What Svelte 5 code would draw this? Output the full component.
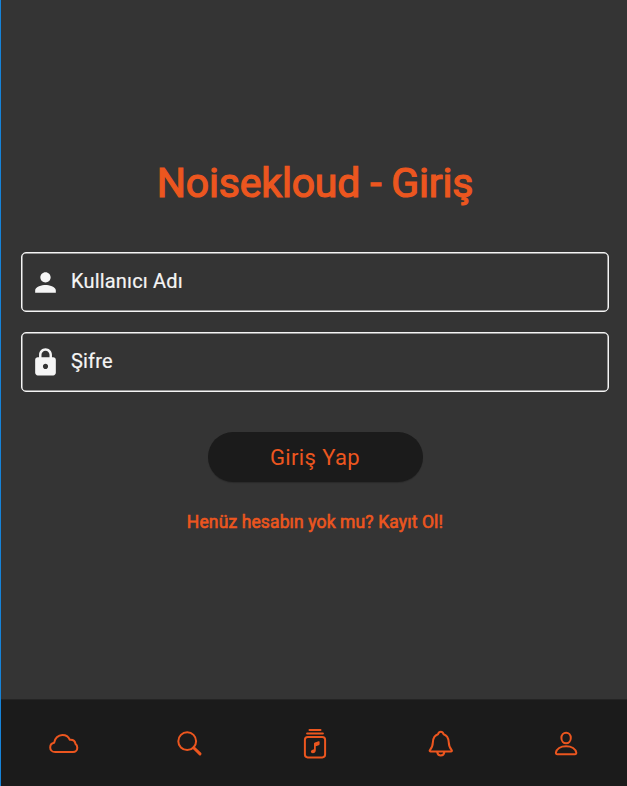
<script>
  const fields = [
    { label: 'Kullanıcı Adı', type: 'text', icon: 'M12 12c2.21 0 4-1.79 4-4s-1.79-4-4-4-4 1.79-4 4 1.79 4 4 4zm0 2c-2.67 0-8 1.34-8 4v2h16v-2c0-2.66-5.33-4-8-4z' },
    { label: 'Şifre', type: 'password', icon: 'M18 8h-1V6c0-2.76-2.24-5-5-5S7 3.24 7 6v2H6c-1.1 0-2 .9-2 2v10c0 1.1.9 2 2 2h12c1.1 0 2-.9 2-2V10c0-1.1-.9-2-2-2zm-6 9c-1.1 0-2-.9-2-2s.9-2 2-2 2 .9 2 2-.9 2-2 2zm3.1-9H8.9V6c0-1.71 1.39-3.1 3.1-3.1 1.71 0 3.1 1.39 3.1 3.1v2z' }
  ];
</script>

<div class="app">
  <main>
    <h1>Noisekloud - Giriş</h1>
    {#each fields as field}
      <label class="field">
        <svg viewBox="0 0 24 24" width="31" height="31"><path d={field.icon} /></svg>
        <input type={field.type} placeholder={field.label} />
      </label>
    {/each}
    <button class="login">Giriş Yap</button>
    <button class="register">Henüz hesabın yok mu? Kayıt Ol!</button>
  </main>
  <nav>
    <button aria-label="Cloud">
      <svg viewBox="0 0 40 40"><path d="M11.2 28C8 28 6.2 25.900 6.2 23.400C6.2 21 7.8 19.200 10.100 18.800C10.700 14.400 14.100 11 18.400 11C21.900 11 24.500 12.800 25.700 15.700C28.900 15.400 31.100 17.200 31.500 19.900C32.700 20.700 33.300 22.100 33.300 23.700C33.300 26.200 31.500 28 29 28Z" /></svg>
    </button>
    <button aria-label="Ara">
      <svg viewBox="0 0 40 40"><circle cx="18.2" cy="17.2" r="8.9" /><path class="handle" d="M24.700 23.700L31 29.900" /></svg>
    </button>
    <button aria-label="Albümler">
      <svg viewBox="0 0 40 40"><path d="M15.5 6H26.5M13.1 9.500H28.900" /><rect x="10.9" y="13" width="20.2" height="20.4" rx="2.8" /><path class="note" d="M20 19.600Q20 18.700 20.900 18.400L24.600 17.300Q25.600 17 25.600 18V19.900Q25.600 20.900 24.700 21.200L21.800 22.200V26.300C21.800 28.400 20.400 29.300 18.900 29.300C17.600 29.300 16.900 28.600 16.900 27.600C16.900 26.500 17.700 26 18.700 25.700L20 25.300Z" /></svg>
    </button>
    <button aria-label="Bildirimler">
      <svg viewBox="0 0 40 40"><path transform="translate(1.5 0)" d="M9.8 27.4C9.1 27.4 9 26.7 9.4 26.2C11.4 24 12.2 22.7 12.4 18C12.7 13.5 14.3 11.2 17.5 10.2C18 8.7 18.9 7.8 20.3 7.8C21.7 7.8 22.6 8.7 23.1 10.2C26.3 11.2 27.9 13.5 28.2 18C28.4 22.7 29.2 24 31.2 26.2C31.6 26.7 31.5 27.4 30.8 27.4ZM16.7 28C17 30.2 18.3 31.4 20.3 31.4C22.3 31.4 23.6 30.2 23.9 28" /></svg>
    </button>
    <button aria-label="Profil">
      <svg viewBox="0 0 40 40"><g transform="translate(1.8 0)"><ellipse cx="20.3" cy="14" rx="4.7" ry="5.3" /><path d="M11.5 30.2C10.5 30.2 10 29.7 10.1 28.7C10.7 24.9 14.7 22.2 20.3 22.2C25.9 22.2 29.9 24.9 30.5 28.7C30.6 29.7 30.1 30.2 29.1 30.2Z" /></g></svg>
    </button>
  </nav>
</div>

<style>
  .app {
    box-sizing: border-box;
    width: 100%;
    height: 786px;
    display: flex;
    flex-direction: column;
    background: #343434;
    border-left: 1px solid #1683d8;
    font-family: Roboto, sans-serif;
    color: #ec561f;
  }
  main {
    flex: 1;
    display: flex;
    flex-direction: column;
    align-items: center;
    padding: 158px 18px 0 20px;
  }
  h1 {
    margin: 0 0 44px;
    font-size: 41px;
    line-height: 50px;
    font-weight: 400;
    letter-spacing: -0.2px;
    white-space: nowrap;
    -webkit-text-stroke: 1.2px currentColor;
  }
  .field {
    box-sizing: border-box;
    width: 100%;
    height: 60px;
    margin-bottom: 20px;
    display: flex;
    align-items: center;
    gap: 10px;
    padding-left: 8px;
    border: 1px solid #f5f5f5;
    box-shadow: inset 0 0 0 0.5px #f5f5f5;
    border-radius: 5px;
  }
  .field svg { fill: #f5f5f5; flex: none; }
  input {
    flex: 1;
    min-width: 0;
    padding: 0 0 2px;
    border: 0;
    outline: 0;
    background: none;
    font: 400 20px Roboto, sans-serif;
    letter-spacing: 0.17px;
    color: #f5f5f5;
  }
  input::placeholder {
    color: #f5f5f5;
    opacity: 1;
    -webkit-text-stroke: 0.2px #f5f5f5;
  }
  button {
    padding: 0;
    border: 0;
    background: none;
    font-family: inherit;
    color: inherit;
  }
  .login {
    width: 215px;
    height: 50px;
    margin-top: 20px;
    border-radius: 25px;
    background: #1b1b1b;
    box-shadow: 0 1px 1px #0003;
    font-size: 22px;
    letter-spacing: 0.38px;
  }
  .register {
    margin-top: 30px;
    font-size: 17.5px;
    line-height: 21px;
    letter-spacing: 0.12px;
    white-space: nowrap;
    -webkit-text-stroke: 0.6px currentColor;
  }
  nav {
    box-sizing: border-box;
    height: 87px;
    padding-top: 2px;
    flex: none;
    display: flex;
    background: #1b1b1b;
    box-shadow: inset 0 1px #242424;
  }
  nav button {
    flex: 1;
    display: flex;
    align-items: center;
    justify-content: center;
  }
  nav svg {
    width: 40px;
    height: 40px;
    fill: none;
    stroke: currentColor;
    stroke-width: 2;
    stroke-linecap: round;
    stroke-linejoin: round;
  }
  .handle { stroke-width: 3; }
  .note { fill: currentColor; stroke: none; }
</style>
